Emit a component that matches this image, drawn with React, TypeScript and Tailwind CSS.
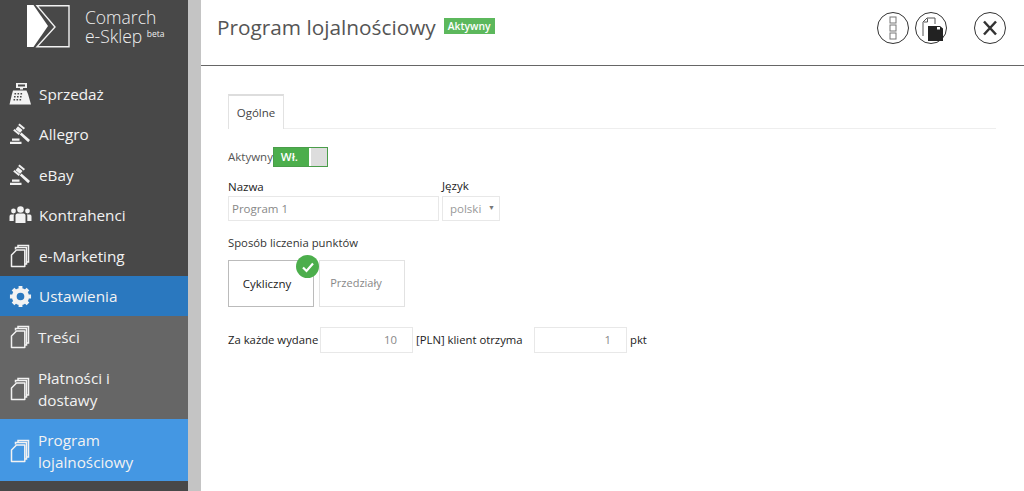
import React from 'react'

const font = { fontFamily: '"Open Sans", sans-serif' }

function Pages() {
  return (
    <svg width="20" height="24" viewBox="0 0 20 24" fill="none" stroke="currentColor" strokeWidth="1.5">
      <path d="M8 3V1.500h10.500V18h-1.500" />
      <path d="M5.500 5.500V3.500h11V20h-1.500" />
      <path d="M6.500 6h8.300v16.500H1.500V11z" strokeLinejoin="round" />
    </svg>
  )
}

function Gavel() {
  return (
    <svg width="22" height="22" viewBox="0 0 22 22" fill="currentColor">
      <path d="M10.500 .5 16 5l-1.300 1.500-5.500-4.500z" />
      <path d="M9 3.300 13.500 7l-2.500 3-4.500-3.700z" />
      <path d="M5.500 6l5.500 4.500-1.300 1.500-5.500-4.500z" />
      <path d="M12.500 9.500 21 17l-1.800 2.200-8.400-7.700z" />
      <path d="M3 15.500h7.500v2.200H3zM1 18.700h11.500V21H1z" />
    </svg>
  )
}

function Register() {
  return (
    <svg width="23" height="22" viewBox="0 0 23 22" fill="currentColor">
      <path d="M7 0h11v5h-4v1.500h-3V5H7z" />
      <path d="M9 1.500h7v2H9z" fill="#484848" />
      <path d="M4 7.500h13.500L19 11l3 10.500H.500L3 11z" />
      <path d="M5.500 10h1.600v1.500H5.500zM8.500 10h1.600v1.500H8.500zM11.500 10h1.600v1.500h-1.600zM5 13h1.600v1.500H5zM8 13h1.600v1.500H8zM11 13h1.600v1.500H11zM4.500 16h1.600v1.500H4.500zM7.500 16h1.600v1.500H7.500zM10.500 16h1.600v1.500h-1.600z" fill="#484848" />
    </svg>
  )
}

function Users() {
  return (
    <svg width="23" height="18" viewBox="0 0 23 18" fill="currentColor">
      <circle cx="11.500" cy="3.500" r="3.300" />
      <path d="M6.500 9.500c0-1.500 1.300-2 2.500-2h5c1.200 0 2.500.5 2.500 2V17h-10z" />
      <circle cx="4.500" cy="5" r="2.400" />
      <path d="M.5 10.500c0-1.400 1-2 2-2h2.800c-.5.500-.6 1-.6 1.800V15H.5z" />
      <circle cx="18.500" cy="5" r="2.400" />
      <path d="M22.500 10.500c0-1.400-1-2-2-2h-2.800c.5.500.6 1 .6 1.800V15h4.200z" />
    </svg>
  )
}

function Gear() {
  return (
    <svg width="23" height="23" viewBox="0 0 24 24" fill="none" stroke="currentColor">
      <circle cx="12" cy="12" r="6.500" strokeWidth="5" />
      <path d="M12 1v4M12 19v4M1 12h4M19 12h4M4.200 4.200l2.900 2.900M16.900 16.900l2.900 2.900M4.200 19.800l2.900-2.900M16.900 7.100l2.900-2.900" strokeWidth="4" />
    </svg>
  )
}

function NavItem({ icon, label, className }: { icon: React.ReactNode; label: React.ReactNode; className: string }) {
  return (
    <div className={`flex items-center text-[#f2f2f2] ${className}`}>
      <div className="flex w-[39px] shrink-0 justify-center pl-[1px]">{icon}</div>
      <div className="text-[15.3px] leading-[22px]">{label}</div>
    </div>
  )
}

function RoundButton({ children, className }: { children: React.ReactNode; className?: string }) {
  return (
    <div className={`flex h-[32px] w-[32px] items-center justify-center rounded-full border-[1.5px] border-[#333] ${className ?? ''}`}>
      {children}
    </div>
  )
}

export default function App() {
  return (
    <div className="flex h-[491px] w-[1024px] overflow-hidden bg-white text-[#333]" style={font}>
      {/* Sidebar */}
      <div className="flex w-[188px] shrink-0 flex-col bg-[#484848]">
        <div className="flex h-[74px] shrink-0 items-start pl-[27px] pt-[5px]">
          <svg width="43" height="43" viewBox="0 0 43 43" fill="none">
            <path d="M0 0h6.500l14.500 21-14.500 21H0z" fill="#fff" />
            <path d="M10 .7h32v41H10L28 22z" stroke="#f2f2f2" strokeWidth="1.400" />
          </svg>
          <div className="ml-[15px] pt-[3px] text-[17.500px] font-light leading-[19px] text-[#f0f0f0]">
            <div>Comarch</div>
            <div className="whitespace-nowrap">
              e-Sklep <span className="relative top-[-6px] text-[8.500px] font-normal">beta</span>
            </div>
          </div>
        </div>
        <NavItem className="h-[40px]" icon={<Register />} label="Sprzedaż" />
        <NavItem className="h-[40px]" icon={<Gavel />} label="Allegro" />
        <NavItem className="h-[41px]" icon={<Gavel />} label="eBay" />
        <NavItem className="h-[40px]" icon={<Users />} label="Kontrahenci" />
        <NavItem className="h-[41px]" icon={<Pages />} label="e-Marketing" />
        <NavItem className="h-[40px] bg-[#2a78bf]" icon={<Gear />} label="Ustawienia" />
        <NavItem className="h-[41px] bg-[#666666] [&>div:last-child]:-ml-[1px]" icon={<Pages />} label="Treści" />
        <NavItem className="h-[62px] bg-[#666666] pt-[1px] [&>div:last-child]:-ml-[1px]" icon={<Pages />} label={<>Płatności i<br />dostawy</>} />
        <NavItem className="h-[62px] bg-[#4497e3] pt-[1px] [&>div:last-child]:-ml-[1px]" icon={<Pages />} label={<>Program<br />lojalnościowy</>} />
      </div>
      <div className="w-[13px] shrink-0 bg-[#c4c4c4]" />

      {/* Main */}
      <div className="flex min-w-0 flex-1 flex-col">
        <div className="flex h-[66px] shrink-0 items-start border-b-[1.500px] border-[#666] pl-[16px] pr-[18px]">
          <h1 className="pt-[11px] text-[20.800px] leading-[32px] text-[#555]">Program lojalnościowy</h1>
          <span className="ml-[8px] mt-[18px] bg-[#5cb85c] px-[4px] text-[10.300px] font-semibold leading-[16px] text-white">Aktywny</span>
          <div className="ml-auto flex pt-[12px]">
            <RoundButton>
              <svg width="8" height="24" viewBox="0 0 8 24" fill="none" stroke="#777" strokeWidth="1">
                <rect x="1" y="1" width="6" height="6" />
                <rect x="1" y="9" width="6" height="6" />
                <rect x="1" y="17" width="6" height="6" />
              </svg>
            </RoundButton>
            <RoundButton className="ml-[6px]">
              <svg width="24" height="26" viewBox="0 0 24 26" fill="none">
                <path d="M4 21V7l4-4h8v6" stroke="#555" strokeWidth="1" />
                <path d="M5 7h3.500V3.500" stroke="#555" strokeWidth="1" />
                <path d="M9 11h12l3 2.500V26H9z" fill="#222" />
                <path d="M18 12h3v2.500h-3z" fill="#fff" />
              </svg>
            </RoundButton>
            <RoundButton className="ml-[27px]">
              <svg width="16" height="16" viewBox="0 0 16 16" fill="none" stroke="#333" strokeWidth="2.500">
                <path d="M2 1.500 14 14.500M14 1.500 2 14.500" />
              </svg>
            </RoundButton>
          </div>
        </div>

        <div className="flex flex-col pl-[27px] pr-[28px] pt-[28px]">
          {/* Tabs */}
          <div className="flex h-[35px] border-b border-[#eeeeee]">
            <div className="flex h-[35px] w-[56px] items-center justify-center border-x border-t-2 border-[#e2e2e2] border-t-[#dddddd] bg-white text-[11.500px] font-medium text-[#444]">
              Ogólne
            </div>
          </div>

          <div className="mt-[18px] flex h-[20px] items-center text-[11.500px] text-[#555]">
            <span>Aktywny</span>
            <div className="flex h-[20px] w-[55px] border border-[#4a9d4a] bg-[#4cae4c]">
              <div className="flex flex-1 items-center justify-center pr-[4px] text-[11.500px] font-semibold text-white">Wł.</div>
              <div className="w-[18px] border-l-2 border-white bg-[#dddddd]" />
            </div>
          </div>

          <div className="mt-[12px] flex gap-[3px]">
            <div className="flex w-[211px] flex-col">
              <label className="text-[11.500px] font-medium leading-[16px] text-[#222]">Nazwa</label>
              <div className="mt-[1px] flex h-[25px] items-center border border-[#e8e8e8] pl-[3px] text-[11.500px] text-[#888]">Program 1</div>
            </div>
            <div className="flex w-[58px] flex-col">
              <label className="-mt-[1px] text-[11.500px] font-medium leading-[16px] text-[#222]">Język</label>
              <div className="mt-[2px] flex h-[25px] items-center justify-between border border-[#e8e8e8] pl-[7px] pr-[4px] text-[11.500px] text-[#999]">
                polski <span className="text-[7px] text-[#777]">▼</span>
              </div>
            </div>
          </div>

          <div className="mt-[14px] text-[11.300px] font-normal leading-[16px] text-[#333]">Sposób liczenia punktów</div>

          <div className="mt-[9px] flex gap-[5px]">
            <div className="relative flex h-[47px] w-[86px] items-center justify-center border border-[#bbbbbb] pr-[8px] text-[11.500px] font-medium text-[#222]">
              Cykliczny
              <div className="absolute -right-[6px] -top-[6px] flex h-[23px] w-[23px] items-center justify-center rounded-full bg-[#4cae4c]">
                <svg width="14" height="14" viewBox="0 0 14 14" fill="none" stroke="#fff" strokeWidth="2.200">
                  <path d="M2 7.500 5.500 11 12 3.500" />
                </svg>
              </div>
            </div>
            <div className="flex h-[47px] w-[86px] items-center justify-center border border-[#e2e2e2] pr-[12px] text-[11px] text-[#888]">Przedziały</div>
          </div>

          <div className="mt-[20px] flex items-center text-[11.300px] text-[#222]">
            <span className="w-[92px] whitespace-nowrap font-medium">Za każde wydane</span>
            <div className="flex h-[26px] w-[93px] items-center justify-end border border-[#e8e8e8] pr-[15px] text-[#888]">10</div>
            <span className="ml-[3px] w-[118px] whitespace-nowrap font-medium">[PLN] klient otrzyma</span>
            <div className="flex h-[26px] w-[93px] items-center justify-end border border-[#e8e8e8] pr-[15px] text-[#888]">1</div>
            <span className="ml-[3px] font-medium">pkt</span>
          </div>
        </div>
      </div>
    </div>
  )
}
